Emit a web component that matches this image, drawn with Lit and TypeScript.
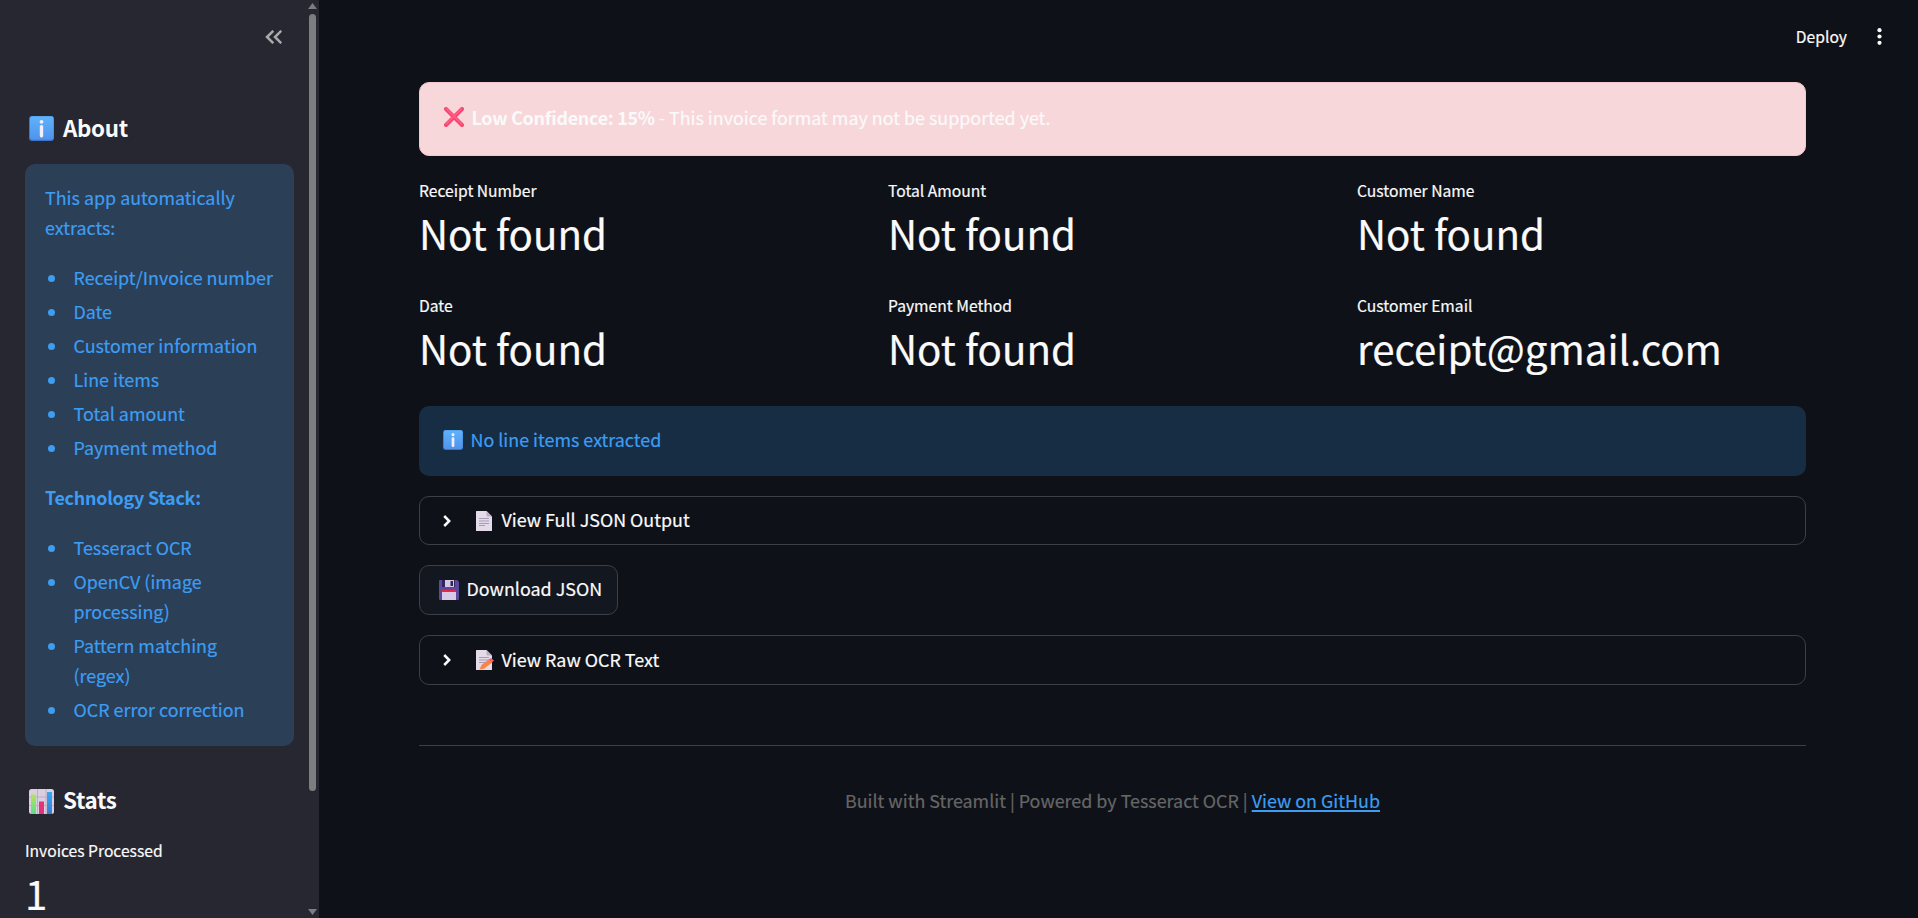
import { LitElement, html, svg, css } from "lit";
import { customElement } from "lit/decorators.js";

const infoIcon = html`<svg class="ic" viewBox="0 0 25 25"><defs><linearGradient id="ig" x1="0" y1="0" x2="0" y2="1"><stop offset="0" stop-color="#5fb3fb"/><stop offset="1" stop-color="#4f93ec"/></linearGradient></defs><rect width="25" height="25" rx="3" fill="#3b74c9"/><rect x="1" y="0.3" width="23.6" height="23.5" rx="2.4" fill="url(#ig)"/><circle cx="12.5" cy="5.8" r="1.9" fill="#f3eefb"/><rect x="10.8" y="9" width="3.4" height="12.4" rx="1.6" fill="#f3eefb"/></svg>`;
const chartIcon = html`<svg class="ic" viewBox="0 0 25 25"><defs><linearGradient id="g1" x1="0" y1="0" x2="0" y2="1"><stop offset="0" stop-color="#b5e35a"/><stop offset="1" stop-color="#5fdc8b"/></linearGradient><linearGradient id="g2" x1="0" y1="0" x2="0" y2="1"><stop offset="0" stop-color="#35a9f5"/><stop offset="1" stop-color="#3b7bd0"/></linearGradient></defs><rect width="25" height="25" rx="2.5" fill="#d9cfe0"/><path d="M8.5 0v25M17 0v25M0 8h25M0 16.500h25" stroke="#b9aec4" stroke-width="1" fill="none"/><rect x="2" y="5.500" width="5" height="19.500" fill="url(#g1)"/><rect x="10" y="12.500" width="5" height="12.500" fill="#e5307a"/><rect x="18" y="3" width="5" height="22" fill="url(#g2)"/></svg>`;
const crossIcon = html`<svg class="ic" viewBox="0 0 20 20"><path d="M2 2L18 18M18 2L2 18" stroke="#f8466f" stroke-width="4" stroke-linecap="round" fill="none"/><path d="M2.500 1.800L17.500 16.800M17.500 1.800L2.500 16.800" stroke="#ff5d88" stroke-width="1.600" stroke-linecap="round" fill="none"/></svg>`;
const page = svg`<path d="M2 0.500Q2 0 2.500 0H12.500L18 5.500V19.500Q18 20 17.500 20H2.500Q2 20 2 19.500Z" fill="#e4dbea"/><path d="M12.500 0L18 5.500H13.500Q12.500 5.500 12.500 4.500Z" fill="#b9adc4"/><path d="M5 7.500H15M5 10H15M5 12.500H15" stroke="#a79bb5" stroke-width="1" fill="none"/>`;
const docIcon = html`<svg class="ic" viewBox="0 0 20 20">${page}<path d="M5 14.500H11" stroke="#a79bb5" stroke-width="1"/></svg>`;
const memoIcon = html`<svg class="ic" viewBox="0 0 20 20">${page}<path d="M5.500 19.500L7.500 15L14.500 9.500L17.500 13L10 18.700Z" fill="#fb8345"/><path d="M14.500 9.500L17 8L20 10.500L17.500 13Z" fill="#f5606a"/></svg>`;
const diskIcon = html`<svg class="ic" viewBox="0 0 20 20"><path d="M0 1Q0 0 1 0H18L20 2V19Q20 20 19 20H1Q0 20 0 19Z" fill="#5a4a98"/><rect x="3" y="0" width="13" height="7" fill="#33235e"/><rect x="6" y="0" width="9" height="7" fill="#d3cbe4"/><rect x="11.500" y="1" width="2.500" height="5" fill="#33235e"/><rect x="3" y="10" width="14" height="10" fill="#d9cbe8"/><rect x="3" y="10" width="14" height="2" fill="#e8274f"/></svg>`;
const chevron = html`<svg class="chev" viewBox="0 0 8 12"><path d="M1.200 1L6.200 6L1.200 11" stroke="#fafafa" stroke-width="2.500" fill="none"/></svg>`;

@customElement("app-root")
export class AppRoot extends LitElement {
  static styles = css`
    :host { display: block; height: 918px; overflow: hidden; font-family: "Noto Sans CJK SC", sans-serif; color: #fafafa; font-size: 17.9px; line-height: 30px; -webkit-text-stroke: 0.2px; }
    * { box-sizing: border-box; }
    p, h3, ul { margin: 0; font: inherit; }
    b { font-weight: 700; letter-spacing: -0.25px; -webkit-text-stroke: 0; }
    .app { display: flex; width: 1918px; height: 918px; background: #0e1117; overflow: hidden; }
    .side { width: 319px; background: #262730; display: flex; justify-content: space-between; overflow: hidden; }
    .content { width: 294px; padding-left: 25px; }
    .collapse { height: 75px; display: flex; justify-content: flex-end; padding: 30px 12px 0 0; }
    .dbl { width: 17px; height: 14px; }
    .ic { width: 20px; height: 20px; display: block; flex: none; }
    h3 { display: flex; align-items: center; gap: 9px; font-size: 22.4px; font-weight: 700; letter-spacing: -0.35px; padding-left: 4px; height: 30px; -webkit-text-stroke: 0; }
    h3 .ic { width: 25px; height: 25px; }
    h3 span { margin-top: -2px; }
    .about { margin-top: 38px; }
    .card { margin-top: 21px; background: #2b3f57; border-radius: 10px; padding: 18px 20px 20px; height: 582px; color: #3d9df3; }
    .card ul { list-style: none; padding: 0; margin: 20px 0; display: grid; gap: 4px; }
    .card li { padding-left: 28.5px; position: relative; }
    .card li::before { content: ""; position: absolute; left: 3px; top: 13px; width: 7px; height: 7px; border-radius: 50%; background: #3d9df3; }
    .stats { margin-top: 40px; }
    .stats span { margin-top: -4px; }
    .label { font-size: 15.65px; line-height: 25px; }
    .value { font-size: 40.25px; line-height: 56px; margin-top: 2px; }
    .side .label { margin-top: 22px; }
    .side .value { line-height: 50px; height: 50px; margin-top: 5px; }
    .bar { width: 13px; height: 918px; display: flex; flex-direction: column; align-items: center; padding-top: 3px; }
    .up, .down { width: 9px; height: 6px; }
    .thumb { width: 7px; height: 777px; margin-top: 5px; border-radius: 4px; background: #7d7c81; }
    .down { margin-top: 118px; }
    .main { flex: 1; padding: 0 112px 0 100px; }
    .top { height: 82px; margin-right: -76px; display: flex; align-items: flex-start; justify-content: flex-end; padding-top: 24px; gap: 30px; font-size: 15.65px; line-height: 25px; }
    .dots { width: 5px; height: 17px; margin-top: 4px; }
    .alert { display: flex; gap: 7.5px; border-radius: 10px; padding: 19px 24px; }
    .alert .ic { margin-top: 5px; }
    .err { height: 74px; background: #f8d7da; border: 1px solid #f5c6cb; }
    .info { height: 70px; background: #172d43; color: #3d9df3; margin-top: 20px; }
    .info p { margin-top: -1px; }
    .grid { display: grid; grid-template-columns: repeat(3, 1fr); grid-auto-rows: 83px; gap: 32px 20px; align-content: start; margin-top: 22px; height: 208px; }
    .exp { height: 49px; margin-top: 20px; border: 1px solid #3d3f44; border-radius: 10px; display: flex; align-items: center; padding-left: 23px; }
    .exp.last { height: 50px; }
    .exp span, .btn span { margin-top: -4px; }
    .exp.last span { margin-top: -3px; }
    .chev { width: 8px; height: 12px; margin-right: 23px; }
    .exp .ic { margin-right: 7.5px; }
    .btn { width: 199px; height: 50px; margin-top: 20px; border: 1px solid #3d3f44; border-radius: 10px; background: #131720; display: flex; align-items: center; padding-left: 19px; gap: 7.5px; }
    .foot { margin-top: 60px; border-top: 1px solid #3d3f44; padding-top: 39px; text-align: center; color: #666; }
    a { color: #3d9df3; text-decoration: underline; text-decoration-thickness: 2px; text-underline-offset: 2px; }
  `;
  list(items: string[]) { return html`<ul>${items.map((i) => html`<li>${i}</li>`)}</ul>`; }
  render() {
    const m = [["Receipt Number", "Not found"], ["Total Amount", "Not found"], ["Customer Name", "Not found"], ["Date", "Not found"], ["Payment Method", "Not found"], ["Customer Email", "receipt@gmail.com"]];
    return html`<div class="app">
      <aside class="side">
        <div class="content">
          <div class="collapse"><svg class="dbl" viewBox="0 0 17 14"><path d="M8.300 0.800L2 7L8.300 13.200M16.300 0.800L10 7L16.300 13.200" stroke="#a9a9ac" stroke-width="2.500" fill="none"/></svg></div>
          <h3 class="about">${infoIcon}<span>About</span></h3>
          <div class="card"><p>This app automatically extracts:</p>
            ${this.list(["Receipt/Invoice number", "Date", "Customer information", "Line items", "Total amount", "Payment method"])}
            <p><b>Technology Stack:</b></p>
            ${this.list(["Tesseract OCR", "OpenCV (image processing)", "Pattern matching (regex)", "OCR error correction"])}
          </div>
          <h3 class="stats">${chartIcon}<span>Stats</span></h3>
          <div class="label">Invoices Processed</div>
          <div class="value">1</div>
        </div>
        <div class="bar"><svg class="up" viewBox="0 0 9 6"><path d="M4.500 0L9 6H0Z" fill="#7d7c81"/></svg><div class="thumb"></div><svg class="down" viewBox="0 0 9 6"><path d="M0 0H9L4.500 6Z" fill="#7d7c81"/></svg></div>
      </aside>
      <main class="main">
        <div class="top"><span>Deploy</span><svg class="dots" viewBox="0 0 5 17"><circle cx="2.500" cy="2.200" r="2.100" fill="#fafafa"/><circle cx="2.500" cy="8.500" r="2.100" fill="#fafafa"/><circle cx="2.500" cy="14.800" r="2.100" fill="#fafafa"/></svg></div>
        <div class="alert err">${crossIcon}<p><b>Low Confidence: 15%</b> - This invoice format may not be supported yet.</p></div>
        <div class="grid">${m.map(([l, v]) => html`<div><div class="label">${l}</div><div class="value">${v}</div></div>`)}</div>
        <div class="alert info">${infoIcon}<p>No line items extracted</p></div>
        <div class="exp">${chevron}${docIcon}<span>View Full JSON Output</span></div>
        <div class="btn">${diskIcon}<span>Download JSON</span></div>
        <div class="exp last">${chevron}${memoIcon}<span>View Raw OCR Text</span></div>
        <div class="foot">Built with Streamlit | Powered by Tesseract OCR | <a>View on GitHub</a></div>
      </main>
    </div>`;
  }
}
